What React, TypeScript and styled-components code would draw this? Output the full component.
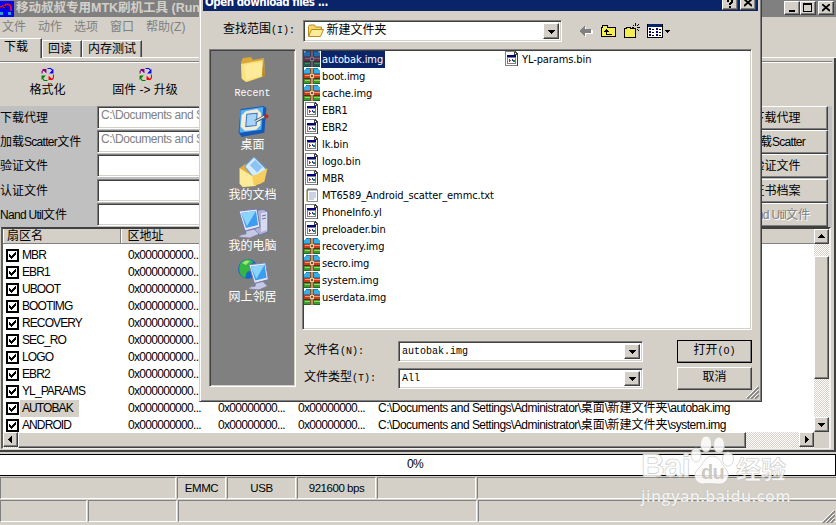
import React from "react";
import styled, { createGlobalStyle, css } from "styled-components";

const GlobalStyle = createGlobalStyle`
  * {
    box-sizing: border-box;
  }
  body {
    margin: 0;
    overflow: hidden;
    background: #d4d0c8;
  }
`;

const sans = `"Liberation Sans", "Noto Sans CJK SC", sans-serif`;
const tahoma = `"DejaVu Sans Condensed", "Noto Sans CJK SC", sans-serif`;
const song = `"Liberation Mono", "Noto Sans CJK SC", monospace`;

const raised = css`
  border: 1px solid;
  border-color: #ffffff #404040 #404040 #ffffff;
  box-shadow: inset -1px -1px #808080;
  background: #d4d0c8;
`;

const sunken = css`
  border: 1px solid;
  border-color: #808080 #ffffff #ffffff #808080;
  box-shadow: inset 1px 1px #404040, inset -1px -1px #d4d0c8;
`;

const dither = css`
  background: repeating-conic-gradient(#ffffff 0 25%, #d4d0c8 0 50%) 0 0 / 2px 2px;
`;

const Desktop = styled.div`
  position: relative;
  width: 836px;
  height: 525px;
  overflow: hidden;
  background: #d4d0c8;
  color: #000;
  font: 12px/17px ${sans};
  letter-spacing: -0.7px;
  white-space: nowrap;
`;

const Han = styled.span`
  letter-spacing: 0;
`;

const TitleBar = styled.div`
  display: flex;
  align-items: center;
  height: 17px;
  padding-right: 2px;
  background: #808080;
  color: #d4d0c8;
`;

const Title = styled.div`
  flex: 1;
  padding: 0 0 1px 2px;
  font-size: 12.5px;
  font-weight: 700;
  letter-spacing: 0;
  line-height: 15px;
`;

const CaptionButton = styled.div<{ $gap?: number }>`
  ${raised}
  display: flex;
  align-items: center;
  justify-content: center;
  width: 16px;
  height: 14px;
  margin-left: ${(p) => p.$gap || 0}px;
  margin-bottom: 2px;
`;

const MenuBar = styled.div`
  display: flex;
  gap: 12px;
  height: 21px;
  padding: 2px 0 0 2px;
  color: #808080;
`;

const Tabs = styled.div`
  display: flex;
  align-items: flex-end;
  height: 20px;
  border-bottom: 1px solid #fff;
`;

const Tab = styled.div<{ $width: number; $active?: boolean }>`
  width: ${(p) => p.$width}px;
  height: ${(p) => (p.$active ? 20 : 17)}px;
  margin-bottom: ${(p) => (p.$active ? -1 : 0)}px;
  padding-left: ${(p) => (p.$active ? 4 : 5)}px;
  line-height: ${(p) => (p.$active ? 17 : 16)}px;
  border-top: 1px solid #fff;
  border-left: ${(p) => (p.$active ? "none" : "1px solid #fff")};
  border-right: 1px solid #404040;
  box-shadow: inset -1px 0 #808080;
  background: #d4d0c8;
`;

const Page = styled.div`
  height: 394px;
  border-right: 2px solid #404040;
  border-bottom: 2px solid #404040;
  padding-top: 3px;
`;

const Toolbar = styled.div`
  display: flex;
  height: 45px;
  margin-right: 2px;
  border-top: 1px solid #808080;
  box-shadow: inset 0 1px #fff;
`;

const Tool = styled.div<{ $width: number }>`
  display: flex;
  flex-direction: column;
  align-items: center;
  gap: 1px;
  width: ${(p) => p.$width}px;
  padding-top: 6px;
  letter-spacing: 0;
`;

const Form = styled.div`
  display: grid;
  grid-template-columns: 97px 1fr 103px;
  grid-auto-rows: 24.2px;
  width: 832px;
  height: 121px;
  padding-right: 4px;
  background: #c0c0c0;
`;

const Label = styled.div`
  padding-top: 4px;
`;

const PathInput = styled.div`
  ${sunken}
  height: 23px;
  padding: 0 3px;
  background: #fff;
  color: #808080;
  letter-spacing: -0.45px;
`;

const FormButton = styled.div<{ $disabled?: boolean }>`
  ${raised}
  height: 24px;
  text-align: center;
  line-height: 23px;
  color: ${(p) => (p.$disabled ? "#808080" : "#000")};
  text-shadow: ${(p) => (p.$disabled ? "1px 1px #fff" : "none")};
`;

const ListView = styled.div`
  display: grid;
  grid-template-columns: 811px 15px;
  grid-template-rows: 203px 16px;
  width: 830px;
  height: 222px;
  margin-left: 1px;
  border: solid;
  border-width: 2px 2px 1px 2px;
  border-color: #404040 #f4f2ee #f4f2ee #606060;
`;

const Table = styled.div`
  overflow: hidden;
  background: #fff;
`;

const HeaderRow = styled.div`
  display: flex;
  height: 15px;
  margin-bottom: 3px;
  border-bottom: 1px solid #808080;
  background: #d4d0c8;
  line-height: 15px;
`;

const HeaderCell = styled.div<{ $width: number }>`
  width: ${(p) => p.$width}px;
  padding-left: 3px;
  border-left: 1px solid #fff;
  border-right: 1px solid #808080;
`;

const Row = styled.div`
  display: grid;
  grid-template-columns: 16px 106px 90px 80px 80px 1fr;
  align-items: center;
  height: 17px;
  padding-left: 3px;
  & > svg {
    display: block;
  }
`;

const Cell = styled.div`
  line-height: 17px;
`;

const PathCell = styled(Cell)`
  letter-spacing: -0.52px;
`;

const Name = styled.span<{ $selected?: boolean }>`
  display: inline-block;
  height: 17px;
  margin-left: -2px;
  padding: 0 6px 0 2px;
  background: ${(p) => (p.$selected ? "#d4d0c8" : "transparent")};
  letter-spacing: -0.9px;
`;

const VScroll = styled.div`
  ${dither}
  display: flex;
  flex-direction: column;
`;

const HScroll = styled.div`
  ${dither}
  display: flex;
`;

const ScrollButton = styled.div`
  ${raised}
  display: flex;
  flex: none;
  align-items: center;
  justify-content: center;
  width: 15px;
  height: 15px;
`;

const Thumb = styled.div<{ $width?: number; $height?: number }>`
  ${raised}
  width: ${(p) => (p.$width ? p.$width + "px" : "auto")};
  height: ${(p) => (p.$height ? p.$height + "px" : "auto")};
`;

const Spacer = styled.div<{ $size?: number }>`
  flex: ${(p) => (p.$size ? `0 0 ${p.$size}px` : 1)};
`;

const Corner = styled.div`
  background: #d4d0c8;
`;

const Progress = styled.div`
  height: 22px;
  margin-top: 2px;
  border: 1px solid #000;
  border-left: none;
  background: #fff;
  text-align: center;
  line-height: 19px;
  padding-right: 5px;
`;

const StatusRow = styled.div<{ $top: number }>`
  display: flex;
  gap: 1px;
  height: 22px;
  margin-top: ${(p) => p.$top}px;
`;

const StatusCell = styled.div<{ $width: number }>`
  flex: none;
  width: ${(p) => p.$width}px;
  border: 1px solid;
  border-color: #808080 #fff #fff #808080;
  text-align: center;
  line-height: 20px;
  font-size: 11.5px;
  letter-spacing: -0.45px;
`;

const Dialog = styled.div`
  position: absolute;
  left: 199px;
  top: -10px;
  width: 563px;
  height: 412px;
  border: 1px solid;
  border-color: #d4d0c8 #404040 #404040 #d4d0c8;
  box-shadow: inset 1px 1px #fff, inset -1px -1px #808080;
  padding: 2px 3px 0;
  background: #d4d0c8;
`;

const DialogTitle = styled.div`
  display: flex;
  height: 18px;
  padding: 3px 2px 0 0;
  background: #0a246a;
  color: #fff;
  font: 700 11.5px/12px ${tahoma};
  letter-spacing: -0.5px;
  & > span {
    flex: 1;
    padding-left: 2px;
  }
`;

const LookIn = styled.div`
  display: flex;
  align-items: center;
  height: 24px;
  margin-top: 8px;
  padding-left: 20px;
  font: 10px/14px ${song};
  letter-spacing: 0;
`;

const HanText = styled.span`
  font-size: 12px;
`;

const LookLabel = styled.div`
  width: 80px;
  margin-top: -2px;
  line-height: 14px;
`;

const Combo = styled.div<{ $width: number; $height?: number }>`
  ${sunken}
  display: flex;
  align-items: center;
  width: ${(p) => p.$width}px;
  height: ${(p) => p.$height || 21}px;
  padding: 2px 2px 2px 3px;
  background: #fff;
  font: 10px/14px ${song};
  letter-spacing: 0;
  & > span {
    flex: 1;
  }
`;

const DropButton = styled.div`
  ${raised}
  display: flex;
  align-items: center;
  justify-content: center;
  align-self: stretch;
  width: 16px;
`;

const NavIcons = styled.div`
  display: flex;
  align-items: center;
  margin-left: 17px;
`;

const DialogBody = styled.div`
  display: flex;
  gap: 6px;
  margin: 6px 0 0 6px;
`;

const Places = styled.div`
  ${sunken}
  width: 87px;
  height: 338px;
  padding-top: 5px;
  background: #808080;
`;

const Place = styled.div`
  display: flex;
  flex-direction: column;
  align-items: center;
  height: 51px;
  color: #fff;
  font: 12px/14px ${song};
  letter-spacing: 0;
  & > svg {
    display: block;
  }
`;

const Latin = styled.span`
  font-size: 10px;
`;

const Main = styled.div`
  width: 450px;
`;

const FileList = styled.div`
  ${sunken}
  display: flex;
  height: 281px;
  padding: 1px 2px 0 1px;
  background: #fff;
  font: 11px/17px ${tahoma};
  letter-spacing: -0.1px;
`;

const Column = styled.div`
  width: 200px;
`;

const File = styled.div`
  display: flex;
  height: 17px;
  & > svg {
    flex: none;
  }
`;

const FileName = styled.span<{ $selected?: boolean }>`
  padding: 0 2px 0 1px;
  line-height: 17px;
  height: 17px;
  background: ${(p) => (p.$selected ? "#0a246a" : "none")};
  color: ${(p) => (p.$selected ? "#fff" : "#000")};
`;

const Field = styled.div<{ $top: number }>`
  display: flex;
  align-items: center;
  margin-top: ${(p) => p.$top}px;
  padding-left: 2px;
  font: 10px/14px ${song};
  letter-spacing: 0;
`;

const FieldLabel = styled.div`
  width: 94px;
`;

const DialogButton = styled.div<{ $default?: boolean }>`
  ${raised}
  width: 75px;
  height: 23px;
  margin-left: 34px;
  text-align: center;
  line-height: 20px;
  outline: ${(p) => (p.$default ? "1px solid #000" : "none")};
  outline-offset: -1px;
`;

const Grip = styled.svg<{ $right: number; $bottom: number }>`
  position: absolute;
  right: ${(p) => p.$right}px;
  bottom: ${(p) => p.$bottom}px;
`;

const Watermark = styled.div`
  position: absolute;
  left: 641px;
  top: 434px;
  width: 160px;
  color: rgba(255, 255, 255, 0.85);
  letter-spacing: 0;
`;

const Brand = styled.div`
  display: flex;
  align-items: flex-end;
  height: 51px;
  font: 700 33px/38px ${sans};
  letter-spacing: -0.8px;
  -webkit-text-stroke: 0.6px #c9c6bf;
  & > b {
    font: 700 25px/34px "Noto Sans CJK SC", sans-serif;
    letter-spacing: 0;
  }
`;

const Url = styled.div`
  font: 600 16px/22px "Open Sans", sans-serif;
  letter-spacing: 0.5px;
  text-shadow: 0 0 1px #a8a49c;
`;

type Kind = "img" | "bin" | "txt";

const partitions = ["MBR", "EBR1", "UBOOT", "BOOTIMG", "RECOVERY", "SEC_RO", "LOGO", "EBR2", "YL_PARAMS", "AUTOBAK", "ANDROID"];

const paths: Record<string, string> = {
  AUTOBAK: "C:\\Documents and Settings\\Administrator\\桌面\\新建文件夹\\autobak.img",
  ANDROID: "C:\\Documents and Settings\\Administrator\\桌面\\新建文件夹\\system.img",
};

const fields = [
  { label: "下载代理", value: "C:\\Documents and Settings", button: "下载代理" },
  { label: "加载Scatter文件", value: "C:\\Documents and Settings", button: "加载Scatter" },
  { label: "验证文件", value: "", button: "验证文件" },
  { label: "认证文件", value: "", button: "证书档案" },
  { label: "Nand Util文件", value: "", button: "Nand Util文件", disabled: true },
];

const files: { name: string; kind: Kind }[] = [
  { name: "autobak.img", kind: "img" },
  { name: "boot.img", kind: "img" },
  { name: "cache.img", kind: "img" },
  { name: "EBR1", kind: "bin" },
  { name: "EBR2", kind: "bin" },
  { name: "lk.bin", kind: "bin" },
  { name: "logo.bin", kind: "bin" },
  { name: "MBR", kind: "bin" },
  { name: "MT6589_Android_scatter_emmc.txt", kind: "txt" },
  { name: "PhoneInfo.yl", kind: "bin" },
  { name: "preloader.bin", kind: "bin" },
  { name: "recovery.img", kind: "img" },
  { name: "secro.img", kind: "img" },
  { name: "system.img", kind: "img" },
  { name: "userdata.img", kind: "img" },
];

// Chinese glyphs keep their full pitch, the latin text around them is tightened
function Mixed({ text }: { text: string }) {
  return (
    <>
      {text.split(/([\u4e00-\u9fff]+)/).map((part, i) => (i % 2 ? <Han key={i}>{part}</Han> : part))}
    </>
  );
}

function Arrow({ dir }: { dir: "up" | "down" | "left" | "right" }) {
  const d = {
    up: "M1 6h7v-1h-1v-1h-1v-1h-1v-1h-1v1h-1v1h-1v1h-1z",
    down: "M1 3h7v1h-1v1h-1v1h-1v1h-1v-1h-1v-1h-1v-1h-1z",
    left: "M6 1v7h-1v-1h-1v-1h-1v-1h-1v-1h1v-1h1v-1h1v-1z",
    right: "M3 1v7h1v-1h1v-1h1v-1h1v-1h-1v-1h-1v-1h-1v-1z",
  }[dir];
  return (
    <svg width="9" height="9" shapeRendering="crispEdges">
      <path d={d} />
    </svg>
  );
}

function AppIcon() {
  return (
    <svg width="14" height="16" viewBox="0 0 14 16">
      <rect width="14" height="16" fill="#0000ff" />
      <path d="M0 6l3-1M4 7c0-5 7-5 7 0v3" fill="none" stroke="#f01010" strokeWidth="1.6" />
      <path d="M0 11h3v3H0zM8 11h3v3H8z" fill="#30a0c0" />
      <path d="M4 5l3 3" stroke="#000" />
    </svg>
  );
}

function CycleIcon() {
  return (
    <svg width="13" height="13" viewBox="0 0 12 12" fill="none" strokeWidth="1">
      <path d="M1 5V3l3-2" stroke="#800080" />
      <path d="M1 1h4v4z" fill="#800080" />
      <path d="M6 .5h3l2 2" stroke="#0000ff" />
      <path d="M11.5 1v4H7.5z" fill="#0000ff" />
      <path d="M11.5 6v3l-2 2" stroke="#ff0000" />
      <path d="M7 7v4h4z" fill="#ff0000" />
      <path d="M6 11.5H3L1 9" stroke="#008000" />
      <path d="M.5 7h4l-4 4z" fill="#008000" />
    </svg>
  );
}

function Check() {
  return (
    <svg width="13" height="13" shapeRendering="crispEdges">
      <rect x="1" y="1" width="11" height="11" fill="#fff" stroke="#000" strokeWidth="2" />
      <path d="M3 5h1v1h1v1h1v-1h1v-1h1v-1h1v-1h1v3h-1v1h-1v1h-1v1h-1v1h-1v-1h-1v-1h-1z" />
    </svg>
  );
}

function FileIcon({ kind, selected }: { kind: Kind; selected?: boolean }) {
  if (kind === "img") {
    return (
      <svg width="17" height="17" shapeRendering="crispEdges">
        <path d="M2 0h12l2 3v3H0V3z" fill="#36aee6" />
        <path d="M2 0h12v1H2zM0 5h16v1H0z" fill="#1d7fba" />
        <path d="M0 6h16v4H0z" fill="#c83c22" />
        <path d="M1 7h15v1H1z" fill="#f49a68" />
        <path d="M0 10h16v1H0z" fill="#5a2c18" />
        <path d="M0 11h16v4H0z" fill="#3a9a30" />
        <path d="M1 12h15v1H1z" fill="#9adb48" />
        <path d="M0 15h16v1H0z" fill="#256a24" />
        <path d="M6 0h4v16H6z" fill="#7b5132" />
        <path d="M7 0h2v16H7z" fill="#c09468" />
        <path d="M6 6h4v4H6z" fill="#e3cf9a" />
        <path d="M7 7h2v2H7z" fill="#7b5132" />
        {selected && <path d="M0 0h16v16H0z" fill="#0a246a" opacity="0.5" />}
      </svg>
    );
  }
  if (kind === "txt") {
    return (
      <svg width="17" height="17">
        <path d="M3.5 2.5h10v12h-10z" fill="#fff" stroke="#8a8a80" />
        <path d="M2.5 2.5v12" stroke="#c0b890" />
        <path d="M5 6h7M5 8h7M5 10h7M5 12h5" stroke="#8090c0" strokeWidth="0.8" />
        <path d="M4 1v3M6 1v3M8 1v3M10 1v3M12 1v3" stroke="#555" strokeWidth="0.8" />
      </svg>
    );
  }
  return (
    <svg width="17" height="17" shapeRendering="crispEdges">
      <path d="M1 0h10l3 3v12H1z" fill="#fff" />
      <path d="M1 0h10v1H1zM1 0h1v15H1zM1 14h13v1H1z" fill="#808080" />
      <path d="M11 0h1v1h1v1h1v13h-1V4h-3V1h1z" fill="#404040" />
      <path d="M11 2h1v1h-1z" fill="#fff" />
      <path d="M3 4h9v9H3z" fill="#808080" />
      <path d="M4 7h7v5H4z" fill="#fff" />
      <path d="M3 4h9v2H3z" fill="#000080" />
      <path d="M5 8h1v3H5zM6 9h1v1H6z" fill="#d02020" />
      <path d="M8 8h1v2H8z" fill="#2030c0" />
      <path d="M9 9h2v2H9z" fill="#208040" />
    </svg>
  );
}

function Folder() {
  return (
    <svg width="32" height="32" viewBox="1 2 32 32">
      <path d="M5 9l2-4 8-1 2 3 11-2 1 18-18 6-6-4z" fill="#d9a83a" />
      <path d="M5 11l22-4 1 16-18 6-4-3z" fill="#fbe27c" />
      <path d="M8 12l19-3v13l-17 5z" fill="#fdf0a8" opacity="0.7" />
      <path d="M27 6l2 17-3 1z" fill="#b9852a" />
    </svg>
  );
}

function SmallFolder() {
  return (
    <svg width="17" height="16" viewBox="0 0 17 16">
      <path d="M1.5 13V3.5l1-1.5h5l1 2h6v3" fill="#f8d868" stroke="#b88a20" />
      <path d="M1.5 13.5l3-7h12l-3 7z" fill="#ffec98" stroke="#b88a20" />
    </svg>
  );
}

function DesktopIcon() {
  return (
    <svg width="34" height="33" viewBox="0 1 32 32">
      <path d="M4 4l22-3 3 2-2 24-22 4-3-4z" fill="#1559b8" />
      <path d="M4 5l22-3-2 22-21 3z" fill="#58b0f4" />
      <path d="M9 6l11-2 4 4-1 12-4 4-11 1-4-4 1-11z" fill="#f4edd2" />
      <path d="M10 9l10-1-1 12-10 1z" fill="#a9d4f8" stroke="#3779c4" />
      <path d="M18 16l10-5" stroke="#405870" strokeWidth="3" />
      <path d="M18 16l9-5" stroke="#dfe8f0" strokeWidth="1.3" />
      <circle cx="29" cy="11" r="2" fill="#c82020" />
    </svg>
  );
}

function DocumentsIcon() {
  return (
    <svg width="32" height="32" viewBox="1 1 30 31">
      <path d="M3 12l5-4 18 4-2 15-18 3z" fill="#e3ae40" />
      <path d="M8 10l9-9 12 12-10 11z" fill="#d4ecfd" stroke="#6ba4dc" />
      <path d="M13 9l5-5 7 7-5 5z" fill="#8bc3f4" />
      <path d="M3 12l13 8 3 9-13 1-3-3z" fill="#fdeb9a" />
      <path d="M17 29l-2-10 5-1 10-6-3 13z" fill="#f7cd5c" />
    </svg>
  );
}

function Monitor() {
  return (
    <>
      <path d="M9 24l8-2 5 5-9 4-11-1c1-3 4-2 7-3z" fill="#c5c8e4" stroke="#7b7fae" strokeWidth="0.7" />
      <path d="M2 4l18-2 3 18-15 4z" fill="#e6e8f8" stroke="#7378ae" />
      <path d="M4 6l15-2 2 14-12 3z" fill="#3d9df0" />
      <path d="M4 6l15-2-9 15z" fill="#8bd4fb" />
    </>
  );
}

function ComputerIcon() {
  return (
    <svg width="32" height="32" viewBox="0 1 32 32">
      <path d="M18 4l8-2 5 3v20l-8 3-5-3z" fill="#aeb1d4" stroke="#656a98" strokeWidth="0.8" />
      <path d="M24 6l6-1v18l-6 2z" fill="#d8daf0" />
      <path d="M25 9l4-1M25 12l4-1" stroke="#6a70a0" />
      <Monitor />
    </svg>
  );
}

function NetworkIcon() {
  return (
    <svg width="32" height="32" viewBox="0 1 32 32">
      <circle cx="11" cy="11" r="10" fill="#1769c8" />
      <path d="M3 6c4-6 10-6 13-2l-3 4 2 4-5 2-2 6c-5-2-7-7-5-14z" fill="#34b544" />
      <path d="M5 5c3-3 6-3 8-2l-4 4z" fill="#9ce67c" />
      <g transform="translate(10 3) scale(.93)">
        <Monitor />
      </g>
    </svg>
  );
}

function BackIcon() {
  return (
    <svg width="14" height="13" shapeRendering="crispEdges">
      <path d="M1 7l6-5v3h7v4H7v3z" fill="#fff" />
      <path d="M0 6l6-5v3h6v4H6v3z" fill="#808080" />
    </svg>
  );
}

function UpIcon() {
  return (
    <svg width="16" height="14" shapeRendering="crispEdges">
      <path d="M.5 12.5V3.5h1v-2h5v2h8v9z" fill="#f6ee50" stroke="#000" />
      <path d="M5 5h1v1h1v1h1v1H6v2h5v1H5V8H3V7h1V6h1z" />
    </svg>
  );
}

function NewFolderIcon() {
  return (
    <svg width="17" height="16" shapeRendering="crispEdges">
      <path d="M.5 14.5v-9h2v-1h4v1h5v9z" fill="#f6ee50" stroke="#000" />
      <path d="M11 0h1v3h-1zM11 6h1v3h-1zM8 4h2v1H8zM13 4h3v1h-3zM9 2h1v1H9zM13 2h1v1h-1zM14 1h1v1h-1zM13 6h1v1h-1zM14 7h1v1h-1z" />
    </svg>
  );
}

function ViewIcon() {
  return (
    <svg width="24" height="14" shapeRendering="crispEdges">
      <path d="M.5.5h15v13H.5z" fill="#fff" stroke="#000" />
      <path d="M1 0h14v3H1z" fill="#0a246a" />
      <path d="M2 4h2v2H2zM2 7h2v2H2zM2 10h2v2H2zM9 4h2v2H9zM9 7h2v2H9zM9 10h2v2H9z" fill="#000080" />
      <path d="M5 5h2v1H5zM5 8h2v1H5zM5 11h2v1H5zM12 5h2v1h-2zM12 8h2v1h-2zM12 11h2v1h-2z" />
      <path d="M18 6h5v1h-1v1h-1v1h-1v-1h-1v-1h-1z" />
    </svg>
  );
}

function Paw() {
  return (
    <svg width="46" height="50" viewBox="0 0 46 50" fill="#fff" fillOpacity="0.85" stroke="#c4c1ba" strokeWidth="0.6">
      <ellipse cx="6" cy="20" rx="5" ry="7" />
      <ellipse cx="16" cy="9" rx="5.5" ry="8" />
      <ellipse cx="29" cy="10" rx="5.5" ry="8" />
      <ellipse cx="38" cy="24" rx="5.5" ry="7" />
      <path d="M22 21c8 0 9 8 14 13 5 6 1 15-6 15-4 0-13-1-17 0-7 0-11-8-6-14 6-5 8-14 15-14z" />
      <text x="11" y="44" fontSize="20" fontWeight="700" fontFamily="Liberation Sans" fill="#c4c0b8" stroke="none">
        du
      </text>
    </svg>
  );
}

function GripLines() {
  return (
    <>
      <path d="M1 13L13 1M5 13l8-8M9 13l4-4" stroke="#808080" strokeWidth="1.6" />
      <path d="M0 12L12 0M4 12l8-8M8 12l4-4" stroke="#fff" />
    </>
  );
}

const places = [
  { name: "Recent", icon: <Folder />, latin: true },
  { name: "桌面", icon: <DesktopIcon /> },
  { name: "我的文档", icon: <DocumentsIcon /> },
  { name: "我的电脑", icon: <ComputerIcon /> },
  { name: "网上邻居", icon: <NetworkIcon /> },
];

function OpenDialog() {
  return (
    <Dialog>
      <DialogTitle>
        <span>Open download files ...</span>
        <CaptionButton>
          <svg width="8" height="9" shapeRendering="crispEdges">
            <path d="M1 0h5v1h1v3H6v1H5v1H3V4h1V3h1V1H3v2H1zM3 7h2v2H3z" />
          </svg>
        </CaptionButton>
        <CaptionButton $gap={2}>
          <svg width="8" height="8">
            <path d="M0 0l8 7M8 0L0 7" stroke="#000" strokeWidth="1.8" />
          </svg>
        </CaptionButton>
      </DialogTitle>
      <LookIn>
        <LookLabel>
          <HanText>查找范围</HanText>(I):
        </LookLabel>
        <Combo $width={259} $height={22}>
          <SmallFolder />
          <span>
            <HanText>&thinsp;新建文件夹</HanText>
          </span>
          <DropButton>
            <Arrow dir="down" />
          </DropButton>
        </Combo>
        <NavIcons>
          <BackIcon />
          <Spacer $size={8} />
          <UpIcon />
          <Spacer $size={7} />
          <NewFolderIcon />
          <Spacer $size={6} />
          <ViewIcon />
        </NavIcons>
      </LookIn>
      <DialogBody>
        <Places>
          {places.map((p) => (
            <Place key={p.name}>
              {p.icon}
              {p.latin ? <Latin>{p.name}</Latin> : p.name}
            </Place>
          ))}
        </Places>
        <Main>
          <FileList>
            <Column>
              {files.map((f, i) => (
                <File key={f.name}>
                  <FileIcon kind={f.kind} selected={i === 0} />
                  <FileName $selected={i === 0}>{f.name}</FileName>
                </File>
              ))}
            </Column>
            <Column>
              <File>
                <FileIcon kind="bin" />
                <FileName>YL-params.bin</FileName>
              </File>
            </Column>
          </FileList>
          <Field $top={10}>
            <FieldLabel>
              <HanText>文件名</HanText>(N):
            </FieldLabel>
            <Combo $width={245}>
              <span>autobak.img</span>
              <DropButton>
                <Arrow dir="down" />
              </DropButton>
            </Combo>
            <DialogButton $default>
              <HanText>打开</HanText>(O)
            </DialogButton>
          </Field>
          <Field $top={4}>
            <FieldLabel>
              <HanText>文件类型</HanText>(T):
            </FieldLabel>
            <Combo $width={245}>
              <span>All</span>
              <DropButton>
                <Arrow dir="down" />
              </DropButton>
            </Combo>
            <DialogButton>
              <HanText>取消</HanText>
            </DialogButton>
          </Field>
        </Main>
      </DialogBody>
      <Grip $right={2} $bottom={2} width="13" height="13">
        <GripLines />
      </Grip>
    </Dialog>
  );
}

function App() {
  return (
    <Desktop>
      <GlobalStyle />
      <TitleBar>
        <AppIcon />
        <Title>移动叔叔专用MTK刷机工具 (Run</Title>
        <CaptionButton>
          <svg width="10" height="9" shapeRendering="crispEdges">
            <path d="M2 7h6v2H2z" />
          </svg>
        </CaptionButton>
        <CaptionButton>
          <svg width="10" height="9" shapeRendering="crispEdges">
            <path d="M.5 0v8.5h8V.5h-8M0 1h9" fill="none" stroke="#000" />
          </svg>
        </CaptionButton>
        <CaptionButton $gap={2}>
          <svg width="8" height="8">
            <path d="M0 0l8 7M8 0L0 7" stroke="#000" strokeWidth="1.8" />
          </svg>
        </CaptionButton>
      </TitleBar>
      <MenuBar>
        {["文件", "动作", "选项", "窗口", "帮助(Z)"].map((m) => (
          <div key={m}>
            <Han>{m}</Han>
          </div>
        ))}
      </MenuBar>
      <Tabs>
        <Tab $width={42} $active>
          <Han>下载</Han>
        </Tab>
        <Tab $width={40}>
          <Han>回读</Han>
        </Tab>
        <Tab $width={60}>
          <Han>内存测试</Han>
        </Tab>
      </Tabs>
      <Page>
        <Toolbar>
          <Tool $width={95}>
            <CycleIcon />
            格式化
          </Tool>
          <Tool $width={100}>
            <CycleIcon />
            固件 -&gt; 升级
          </Tool>
        </Toolbar>
        <Form>
          {fields.map((f) => (
            <React.Fragment key={f.label}>
              <Label>
                <Mixed text={f.label} />
              </Label>
              <PathInput>{f.value}</PathInput>
              <FormButton $disabled={f.disabled}>
                <Mixed text={f.button} />
              </FormButton>
            </React.Fragment>
          ))}
        </Form>
        <ListView>
          <Table>
            <HeaderRow>
              <HeaderCell $width={118}>
                <Han>扇区名</Han>
              </HeaderCell>
              <HeaderCell $width={92}>
                <Han>&thinsp;区地址</Han>
              </HeaderCell>
            </HeaderRow>
            {partitions.map((name) => (
              <Row key={name}>
                <Check />
                <Cell>
                  <Name $selected={name === "AUTOBAK"}>{name}</Name>
                </Cell>
                <Cell>0x000000000...</Cell>
                <Cell>0x00000000...</Cell>
                <Cell>0x00000000...</Cell>
                <PathCell>
                  <Mixed text={paths[name] || ""} />
                </PathCell>
              </Row>
            ))}
          </Table>
          <VScroll>
            <ScrollButton>
              <Arrow dir="up" />
            </ScrollButton>
            <Spacer $size={12} />
            <Thumb $height={123} />
            <Spacer />
            <ScrollButton>
              <Arrow dir="down" />
            </ScrollButton>
          </VScroll>
          <HScroll>
            <ScrollButton>
              <Arrow dir="left" />
            </ScrollButton>
            <Thumb $width={728} />
            <Spacer />
            <ScrollButton>
              <Arrow dir="right" />
            </ScrollButton>
          </HScroll>
          <Corner />
        </ListView>
      </Page>
      <Progress>0%</Progress>
      <StatusRow $top={1}>
        <StatusCell $width={176} />
        <StatusCell $width={49}>EMMC</StatusCell>
        <StatusCell $width={69}>USB</StatusCell>
        <StatusCell $width={79}>921600 bps</StatusCell>
        <StatusCell $width={99} />
        <StatusCell $width={360} />
      </StatusRow>
      <StatusRow $top={1}>
        <StatusCell $width={87} />
        <StatusCell $width={89} />
        <StatusCell $width={299} />
        <StatusCell $width={360} />
      </StatusRow>
      <Grip $right={1} $bottom={2} width="13" height="13">
        <GripLines />
      </Grip>
      <OpenDialog />
      <Watermark>
        <Brand>
          Bai
          <Paw />
          <b>经验</b>
        </Brand>
        <Url>jingyan.baidu.com</Url>
      </Watermark>
    </Desktop>
  );
}

export default App;
